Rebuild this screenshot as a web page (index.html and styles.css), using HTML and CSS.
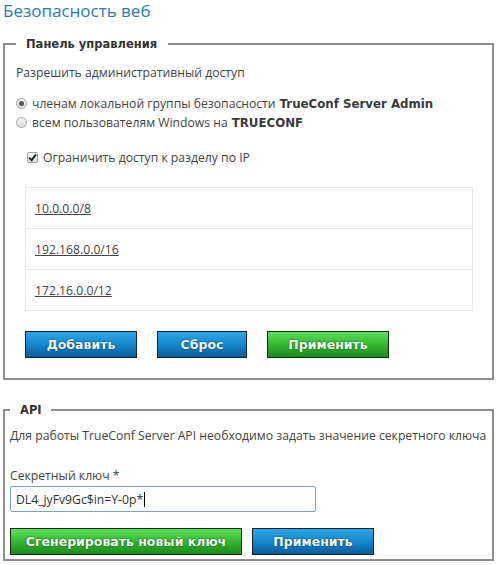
FILE: index.html
```html
<!DOCTYPE html>
<html lang="ru">
<head>
<meta charset="utf-8">
<title>Безопасность веб</title>
<link rel="stylesheet" href="styles.css">
</head>
<body>
<h1 class="title">Безопасность веб</h1>

<fieldset class="box box-panel">
  <legend class="legend legend-panel">Панель управления</legend>
  <p class="label">Разрешить административный доступ</p>
  <div class="radios">
    <label class="opt"><span class="radio checked"></span>членам локальной группы безопасности <b class="strong">TrueConf Server Admin</b></label>
    <label class="opt"><span class="radio"></span>всем пользователям Windows на <b class="strong">TRUECONF</b></label>
  </div>
  <label class="opt check-row"><span class="check"><svg width="9" height="9" viewBox="0 0 9 9"><path d="M1.2 4.6 L3.6 7.2 L7.9 1.4" fill="none" stroke="#222" stroke-width="1.9"/></svg></span>Ограничить доступ к разделу по IP</label>
  <div class="iplist">
    <div class="iprow"><a class="ip" href="#">10.0.0.0/8</a></div>
    <div class="iprow"><a class="ip" href="#">192.168.0.0/16</a></div>
    <div class="iprow"><a class="ip" href="#">172.16.0.0/12</a></div>
  </div>
  <div class="buttons buttons-panel">
    <button class="btn btn-blue btn-w112">Добавить</button>
    <button class="btn btn-blue btn-w90">Сброс</button>
    <button class="btn btn-green btn-w122">Применить</button>
  </div>
</fieldset>

<fieldset class="box box-api">
  <legend class="legend legend-api">API</legend>
  <p class="label label-info">Для работы TrueConf Server API необходимо задать значение секретного ключа</p>
  <p class="label label-key">Секретный ключ *</p>
  <div class="input">DL4_jyFv9Gc$in=Y-0p*<span class="caret"></span></div>
  <div class="buttons buttons-api">
    <button class="btn btn-green btn-w232">Сгенерировать новый ключ</button>
    <button class="btn btn-blue btn-w122">Применить</button>
  </div>
</fieldset>
</body>
</html>
```

FILE: styles.css
```css
html, body {
  margin: 0;
  padding: 0;
  background: #fff;
}
body {
  font-family: "Open Sans", "DejaVu Sans", sans-serif;
  font-size: 12.2px;
  color: #444;
  width: 498px;
}
.title {
  margin: 0;
  padding: 0 0 0 3px;
  height: 37px;
  font-size: 17px;
  font-weight: 400;
  line-height: 22px;
  color: #2b7bbb;
}
.box {
  margin: 0 4px 0 3px;
  padding: 0;
  border: 2px solid #8e8e8e;
  min-width: 0;
}
.box-panel {
  height: 343px;
  box-sizing: border-box;
  padding: 0 0 0 11px;
}
.box-api {
  margin-top: 23px;
  height: 158px;
  box-sizing: border-box;
  padding: 0 0 0 5px;
}
.legend {
  font-family: "DejaVu Sans", sans-serif;
  font-weight: 700;
  font-size: 11.5px;
  color: #333;
  line-height: 14px;
}
.legend-panel {
  margin-left: 0;
  padding: 0 11px 0 10px;
}
.legend-api {
  margin-left: 0;
  padding: 0 9px 0 10px;
}
.label {
  margin: 0;
  line-height: 18px;
}
.box-panel > .label {
  margin-top: 13px;
}
.radios {
  margin-top: 12px;
  display: flex;
  flex-direction: column;
}
.opt {
  display: flex;
  align-items: center;
  height: 19px;
  white-space: nowrap;
}
.strong {
  font-family: "DejaVu Sans", sans-serif;
  font-size: 11.8px;
  font-weight: 700;
  color: #3a3a3a;
  margin-left: 4px;
}
.radio {
  width: 11px;
  height: 11px;
  border-radius: 50%;
  border: 1px solid #a6a6a6;
  background: linear-gradient(#f4f4f4, #dcdcdc);
  box-sizing: border-box;
  margin-right: 5px;
  position: relative;
  flex: none;
}
.radio.checked::after {
  content: "";
  position: absolute;
  left: 2px;
  top: 2px;
  width: 5px;
  height: 5px;
  border-radius: 50%;
  background: #5a5a5a;
}
.check-row {
  margin-top: 16px;
  margin-left: 11px;
}
.check {
  width: 11px;
  height: 11px;
  border: 1px solid #a0a0a0;
  border-radius: 2px;
  background: linear-gradient(#f6f6f6, #dedede);
  box-sizing: border-box;
  margin-right: 5px;
  display: flex;
  align-items: center;
  justify-content: center;
  flex: none;
}
.iplist {
  margin: 20px 0 0 9px;
  width: 448px;
  border: 1px solid #e3e8eb;
  box-sizing: border-box;
}
.iprow {
  height: 41px;
  display: flex;
  align-items: center;
  padding-left: 9px;
  border-top: 1px solid #e3e8eb;
  box-sizing: border-box;
}
.iprow:first-child {
  border-top: none;
  height: 40px;
}
.ip {
  color: #444;
  text-decoration: underline;
}
.buttons {
  display: flex;
}
.buttons-panel {
  margin: 20px 0 0 9px;
}
.buttons-panel .btn + .btn {
  margin-left: 20px;
}
.buttons-api {
  margin: 16px 0 0 0;
}
.buttons-api .btn + .btn {
  margin-left: 10px;
}
.btn {
  height: 27px;
  border: 1px solid #10202c;
  padding: 0;
  font-family: "DejaVu Sans", sans-serif;
  font-weight: 700;
  font-size: 12.5px;
  color: #eef6ff;
  text-shadow: 0 0 2px rgba(0,0,0,0.6);
  cursor: pointer;
}
.btn-blue {
  background: linear-gradient(#2fa6e6, #1584c9 55%, #0a5b98);
}
.btn-green {
  background: linear-gradient(#5ee05c, #33b232 55%, #1c8a1c);
  border-color: #0f2a0f;
  color: #f0fff0;
}
.btn-w112 { width: 112px; }
.btn-w90 { width: 90px; }
.btn-w122 { width: 122px; }
.btn-w232 { width: 232px; }
.label-info {
  margin-top: 10px;
}
.label-key {
  margin-top: 22px;
}
.input {
  margin-top: 1px;
  width: 306px;
  height: 26px;
  box-sizing: border-box;
  border: 1px solid #7da2ce;
  border-radius: 2px;
  padding-left: 5px;
  display: flex;
  align-items: center;
  color: #333;
  font-size: 12.2px;
}
.caret {
  width: 1px;
  height: 15px;
  background: #000;
  margin-left: 1px;
}
```
